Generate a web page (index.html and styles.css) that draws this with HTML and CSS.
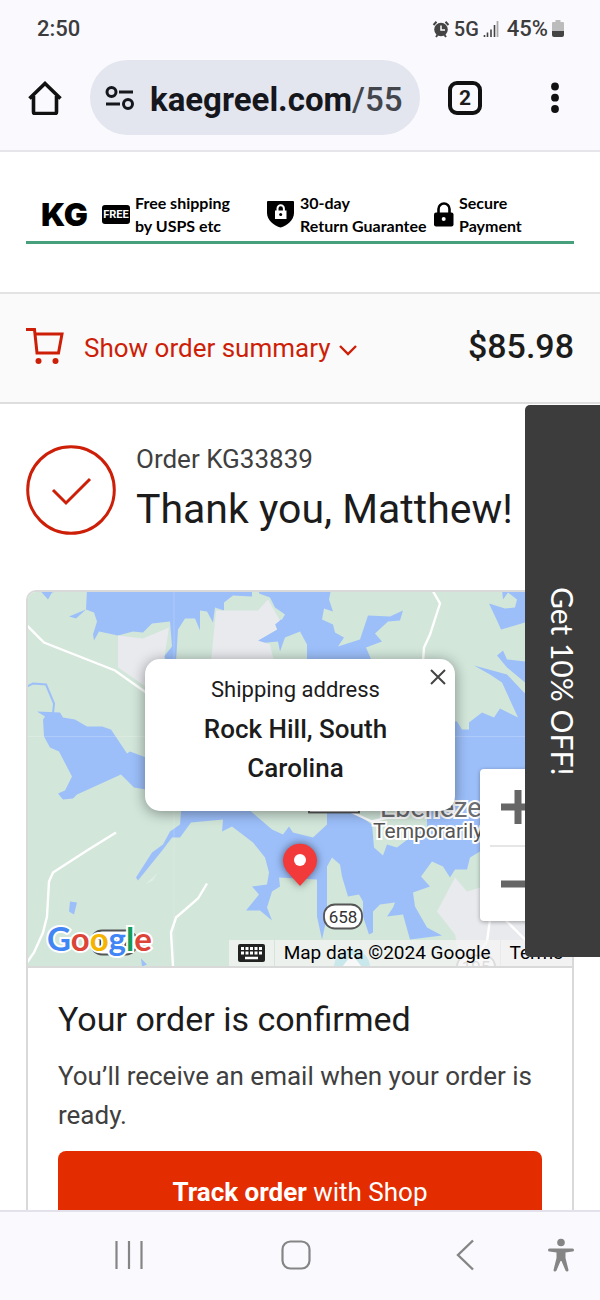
FILE: index.html
```html
<!DOCTYPE html>
<html lang="en">
<head>
<meta charset="utf-8">
<meta name="viewport" content="width=device-width, initial-scale=1">
<title>Thank you, Matthew!</title>
<link rel="stylesheet" href="styles.css">
</head>
<body>
<header class="chrome">
  <div class="status">
    <span class="clock">2:50</span>
    <div class="status-icons">
      <svg width="18" height="18" viewBox="0 0 18 18"><circle cx="9" cy="9.500" r="6.800" fill="#444"/><path d="M1.500 5 4.500 1.800M16.500 5 13.500 1.800M4 17l1.500-2M14 17l-1.500-2" stroke="#444" stroke-width="2"/><path d="M9 5.500V10h4" fill="none" stroke="#fff" stroke-width="1.500"/></svg>
      <span class="net">5G</span>
      <svg width="16" height="17" viewBox="0 0 16 17"><path d="M1.500 15v2M4.500 12.500V17M8 9.500V17M11.500 5V17" stroke="#444" stroke-width="1.600"/><path d="M14.500 1v16" stroke="#aaa" stroke-width="1.800"/></svg>
      <span class="pct">45%</span>
      <svg width="12" height="17" viewBox="0 0 12 17"><path d="M3.500 0h5v2H11q1 0 1 1v8H0V3q0-1 1-1h2.500z" fill="#bcbcbc"/><path d="M0 11h12v4q0 2-2 2H2q-2 0-2-2z" fill="#444"/></svg>
    </div>
  </div>
  <div class="toolbar">
    <button class="icon-btn" aria-label="Home"><svg width="34" height="34" viewBox="0 0 34 34"><path d="M1.500 17.500 17 2.500l15.500 15M5.500 15v16q0 1.500 1.500 1.500h20q1.500 0 1.500-1.500V15" fill="none" stroke="#111" stroke-width="3.600"/></svg></button>
    <button class="address"><svg width="29" height="26" viewBox="0 0 29 26" fill="none" stroke="#15171c" stroke-width="3"><circle cx="6.500" cy="7" r="4.500"/><path d="M14 7h14M1 19h14"/><circle cx="23" cy="19" r="4.500"/></svg><span class="url"><span class="domain">kaegreel.com</span>/55</span></button>
    <button class="tabs" aria-label="Open tabs">2</button>
    <button class="icon-btn" aria-label="More options"><svg width="10" height="32" viewBox="0 0 10 32" fill="#111"><circle cx="5" cy="4.500" r="3.900"/><circle cx="5" cy="15.700" r="3.900"/><circle cx="5" cy="27" r="3.900"/></svg></button>
  </div>
</header>

<main class="page">
  <section class="banner">
    <div class="banner-row">
      <span class="brand">KG</span>
      <div class="perk perk-ship"><span class="free">FREE</span><span>Free shipping<br>by USPS etc</span></div>
      <div class="perk perk-return"><svg width="28" height="28" viewBox="0 0 28 28"><path d="M0 2q0-1 1-1h25q1 0 1 1v11c0 7-7 13-13.500 14.500C7 26 0 20 0 13z"/><path d="M10.500 11V8.500a3.200 3.200 0 0 1 6.400 0V11" fill="none" stroke="#fff" stroke-width="2"/><path d="M8 10.500h11.500V19H8z" fill="#fff"/><circle cx="13.700" cy="14.500" r="1.500"/></svg><span>30-day<br>Return Guarantee</span></div>
      <div class="perk perk-pay"><svg width="20" height="25" viewBox="0 0 20 25"><path d="M4.500 12V7a5.500 5.500 0 0 1 11 0v5" fill="none" stroke="#000" stroke-width="2.600"/><rect y="10.500" width="19.500" height="14" rx="2"/><circle cx="9.700" cy="17" r="2" fill="#fff"/></svg><span>Secure<br>Payment</span></div>
    </div>
  </section>

  <section class="summary">
    <button class="summary-toggle">
      <svg width="38" height="38" viewBox="0 0 38 38" fill="none" stroke="#cd1f08" stroke-width="3"><path d="M0 2.500h8.500L11 26h21.500L36 7H9"/><circle cx="12.500" cy="34" r="3" fill="#cd1f08" stroke="none"/><circle cx="29.500" cy="34" r="3" fill="#cd1f08" stroke="none"/></svg>
      <span>Show order summary</span>
      <svg width="18" height="12" viewBox="0 0 18 12"><path d="m1 2 8 8 8-8" fill="none" stroke="#cd1f08" stroke-width="2.400"/></svg>
    </button>
    <strong class="total">$85.98</strong>
  </section>

  <section class="thanks">
    <svg class="check" width="90" height="90" viewBox="0 0 90 90" fill="none" stroke="#cd1f08" stroke-width="3"><circle cx="45" cy="45" r="43.300"/><path d="m27 45 13 13 24-24"/></svg>
    <div>
      <p class="order-no">Order KG33839</p>
      <h1>Thank you, Matthew!</h1>
    </div>
  </section>

  <section class="card">
    <div class="map">
      <svg class="map-art" viewBox="28 592 544 375" preserveAspectRatio="xMidYMid slice">
        <path fill="#d2e6da" d="M0 560h620v430H0z"/>
        <g fill="#9cbffa">
          <path d="M87 590 86 610 69 617 76 619 86 610 94 613 97 622 93 635 94 641 99 632 118 636 133 632 143 633 152 624 170 622 172 647 164 657 167 662H176L178 630 185 619H195L200 631V611L207 612 213 623 215 608 224 611V603L233 596 252 597V590H259V594L270 598 275 608 285 615 282 620 274 622 277 630 258 641 257 644 278 642 280 652 285 638 300 632 307 645V662H372L366 648 382 642 375 634 388 622 400 621 403 611 390 617 368 616 360 640 338 647 344 638 335 633 333 625 322 620 324 609 333 612 329 600 331 590z"/>
          <path d="M40 591 48 600 52 593 60 591zM502 590 503 600 508 593 517 600 515 608 505 609 489 604 497 621 501 630 525 623 573 610V590zM503 651 497 656 507 668 525 683V662L507 660z"/>
          <path d="M474 666 490 675 502 683 518 718 500 709 494 718 482 713 469 723V730H462L457 722 420 720V812H573V720L524 693 507 675z"/>
          <path d="M37 712 60 713 63 718 75 720 87 727H102L111 730 127 754 130 752 146 758 180 760V800L146 790 134 788 121 775 77 795 73 799 63 800 58 794 65 791 72 777 59 752 50 748 44 737 43 720 45 717z"/>
          <path d="M182 800 180 825 170 832 163 845 152 853 136 878 138 881 163 850 172 838H180L191 823 223 820 222 832 232 827 253 843 265 858 269 873 267 885 252 887 259 895 246 911H260L272 921 267 908 272 892 280 887 279 878 317 880V917L322 940 327 917V867L332 858 340 865 342 877 348 897 359 895 363 902V917L369 935 373 933V912L380 905 395 903 393 908 387 917 403 915 410 940 442 936 427 928 415 907 413 893 430 887 421 877 432 862 443 867 450 878 455 870 467 870 470 858 480 852 573 830V800z"/>
          <path d="M70 902 77 903 74 915 69 912zM141 959 147 965 142 967z"/>
        </g>
        <path fill="none" stroke="#9cbffa" stroke-width="2" d="M27 687 33 684 46 685 54 704 53 714"/>
        <g fill="#d2e6da"><path d="M250 800V811L272 830 283 835 289 827 293 833 313 838 327 825V800z"/><path d="M335 800 372 825 374 848 383 856 387 845 397 848 410 838 427 828V800z"/><path d="M258 603 259 594 267 599z"/></g>
        <g fill="#e8eaee"><path d="M118 636 143 639 169 628 164 660 150 690 118 668z"/><path d="M216 611H258L268 600 280 621 275 625 277 630 258 641 270 645 274 662H211z"/><path d="M455 878 467 892 480 888 573 860V970H462L455 935 437 912z"/></g>
        <g fill="none" stroke="#fff" stroke-width="2.400"><path d="M27 626 44 643 115 671 146 693"/><path d="M116 833 87 851 53 873 49 882 47 917 43 933 34 953 27 963"/><path d="M207 884 198 899 176 918 171 933 173 967"/><path d="M432 590 440 604 430 635 424 648 423 662"/><path d="M350 812 372 822 412 812M490 920 487 942 470 966M505 920 535 950"/></g>
        <path d="M145 885l13-12-5 8z" fill="#deeee5"/>
        <path d="M27 737H573M174 590V967" stroke="#fff" stroke-opacity=".2" fill="none"/>
        <circle cx="352" cy="968" r="18" fill="#54c4cf"/><path d="M340 970 352 955l12 15z" fill="#fff"/>
        <g fill="#fff" stroke="#555" stroke-width="1.800"><rect x="309" y="790" width="50" height="23"/><rect x="324" y="905" width="38" height="24" rx="11"/><rect x="91" y="931" width="46" height="24" rx="11"/><rect x="457" y="956" width="38" height="22" rx="11" stroke="#999"/></g>
        <g class="map-label"><text x="343" y="923" text-anchor="middle" class="route">658</text><text x="476" y="973" text-anchor="middle" class="route faint">195</text><text x="114" y="949" text-anchor="middle" class="route">1104</text><text x="380" y="817" class="town">Ebenezer</text><text x="373" y="838" class="note">Temporarily</text></g>
        <g class="google"><text x="47" y="951"><tspan fill="#4285f4">G</tspan><tspan fill="#db4437">o</tspan><tspan fill="#f4b400">o</tspan><tspan fill="#4285f4">g</tspan><tspan fill="#0f9d58">l</tspan><tspan fill="#db4437">e</tspan></text></g>
      </svg>
      <svg class="pin" width="38" height="46" viewBox="0 0 38 46"><path d="M19 45 5.500 30A17 17 0 1 1 32.500 30z" fill="#f33a3a"/><circle cx="19" cy="19" r="6" fill="#fff"/></svg>
      <div class="popup">
        <button class="close" aria-label="Close"><svg width="16" height="16" viewBox="0 0 16 16"><path d="m1 1 14 14M15 1 1 15" stroke="#444" stroke-width="2"/></svg></button>
        <p class="popup-label">Shipping address</p>
        <p class="popup-place">Rock Hill, South Carolina</p>
      </div>
      <div class="zoom">
        <button aria-label="Zoom in"><svg width="34" height="34" viewBox="0 0 34 34"><path d="M17 0v34M0 17h34" stroke="#666" stroke-width="7"/></svg></button>
        <button aria-label="Zoom out"><svg width="34" height="34" viewBox="0 0 34 34"><path d="M0 17h34" stroke="#666" stroke-width="7"/></svg></button>
      </div>
      <div class="credits">
        <button aria-label="Keyboard shortcuts"><svg width="27" height="18" viewBox="0 0 27 18"><rect width="27" height="18" rx="2" fill="#222"/><path d="M3 4.500h21M3 9h21" stroke="#fff" stroke-width="3" stroke-dasharray="3 1.500"/><path d="M7 14h13" stroke="#fff" stroke-width="2.500"/></svg></button>
        <span>Map data ©2024 Google</span>
        <a href="#terms">Terms</a>
      </div>
    </div>
    <div class="card-body">
      <h2>Your order is confirmed</h2>
      <p>You’ll receive an email when your order is ready.</p>
      <button class="track"><b>Track order</b> with Shop</button>
    </div>
  </section>
  <button class="promo">Get 10% OFF!</button>
</main>

<nav class="navbar">
  <div class="nav-main">
    <button aria-label="Recent apps"><svg width="28" height="30" viewBox="0 0 28 30"><path d="M1.500 1v28M14 1v28M26.500 1v28" stroke="#858585" stroke-width="2.200"/></svg></button>
    <button aria-label="Home screen"><svg width="30" height="30" viewBox="0 0 30 30"><rect x="1.500" y="1.500" width="27" height="27" rx="8" fill="none" stroke="#858585" stroke-width="2.200"/></svg></button>
    <button aria-label="Back"><svg width="26" height="32" viewBox="0 0 26 32"><path d="M25 1.500 10 16l15 14.500" fill="none" stroke="#858585" stroke-width="2.400"/></svg></button>
  </div>
  <button aria-label="Accessibility"><svg width="26" height="34" viewBox="0 0 26 34" fill="#858585"><circle cx="13" cy="4.500" r="3.800"/><path d="M1.500 10.500h23q1.500 0 1.500 1.500t-1.500 1.600L17.500 14.500V20l3 12q0 1.500-1.500 1.500-1 0-1.500-1L13.500 23h-1L8.500 32.500q-.5 1-1.500 1-1.500 0-1.500-1.500l3-12v-5.500L1.500 13.600Q0 13.500 0 12t1.500-1.500z"/></svg></button>
</nav>
</body>
</html>
```
FILE: styles.css
```css
* { box-sizing: border-box; }
body {
  margin: 0;
  height: 100vh;
  display: flex;
  flex-direction: column;
  overflow: hidden;
  background: #fff;
  color: #1c1c1c;
  font-family: Roboto, "Liberation Sans", sans-serif;
}
button {
  border: 0;
  padding: 0;
  background: none;
  color: inherit;
  font: inherit;
}
p, h1, h2 { margin: 0; font-weight: 400; }
svg { display: block; flex: none; }

.chrome { background: #faf9fe; border-bottom: 2px solid #e6e6ea; }
.status {
  display: flex;
  justify-content: space-between;
  align-items: center;
  height: 60px;
  padding: 0 36px 3px 37px;
  color: #3c3c3c;
  font-weight: 500;
}
.clock { font-size: 22px; }
.status-icons { display: flex; align-items: center; gap: 4px; }
.net { font-size: 20px; }
.pct { font-size: 22px; margin-left: 4px; }
.toolbar {
  display: flex;
  align-items: center;
  height: 90px;
  padding: 0 40px 15px 28px;
}
.address {
  flex: 1;
  display: flex;
  align-items: center;
  gap: 16px;
  min-width: 0;
  height: 75px;
  margin: 0 28px;
  padding: 0 15px;
  border-radius: 38px;
  background: #e3e6ef;
}
.url { padding-top: 4px; font-size: 33px; font-weight: 500; color: #42454c; }
.domain { color: #15171c; font-weight: 700; }
.tabs {
  width: 34px;
  height: 34px;
  margin-right: 68px;
  border: 4px solid #111;
  border-radius: 9px;
  font-size: 21px;
  font-weight: 700;
  line-height: 26px;
}

.page { position: relative; flex: 1; min-height: 0; overflow: hidden; }
.banner { height: 142px; padding: 36px 26px 0; border-bottom: 2px solid #e3e3e3; }
.banner-row {
  display: flex;
  align-items: center;
  height: 56px;
  padding-left: 15px;
  border-bottom: 3px solid #47a07c;
  color: #000;
  font: 700 16px/23px Lato, sans-serif;
  white-space: nowrap;
}
.brand { width: 61px; font: 900 32px/34px Inter, sans-serif; }
.perk { display: flex; align-items: center; gap: 5px; padding-bottom: 1px; }
.perk-ship { width: 165px; }
.perk-return { width: 167px; }
.free {
  width: 28px;
  border-radius: 3px;
  background: #000;
  color: #fff;
  font: 700 11px/19px Roboto, sans-serif;
  text-align: center;
}

.summary {
  display: flex;
  align-items: center;
  justify-content: space-between;
  height: 110px;
  padding: 0 26px 4px;
  border-bottom: 2px solid #dedede;
  background: #fafafa;
}
.summary-toggle {
  display: flex;
  align-items: center;
  gap: 8px;
  color: #cd1f08;
  font-size: 26px;
}
.summary-toggle span { margin-left: 12px; padding-top: 3px; }
.summary-toggle span + svg { margin-top: 8px; }
.total { font-size: 34px; font-weight: 500; }

.thanks { display: flex; gap: 20px; padding: 41px 26px 55px; }
.order-no { font-size: 26px; line-height: 28px; color: #404040; }
h1 { margin-top: 10px; font-size: 41px; line-height: 52px; }

.card { margin: 0 26px; border: 2px solid #d9d9d9; border-radius: 10px; overflow: hidden; }
.map { position: relative; height: 376px; border-bottom: 2px solid #d9d9d9; }
.map-art { width: 100%; height: 100%; }
.map-label text { fill: #555; }
.map-label .route { font-size: 17px; fill: #333; }
.map-label .faint { fill: #999; }
.map-label .town, .map-label .note { paint-order: stroke; stroke: #fff; stroke-width: 4px; }
.map-label .town { font-size: 27px; fill: #6c6f73; }
.map-label .note { font-size: 21px; }
.google {
  font-family: Lato, sans-serif;
  font-size: 33px;
  font-weight: 700;
  paint-order: stroke;
  stroke: #fff;
  stroke-width: 4px;
}
.pin {
  position: absolute;
  left: 50%;
  bottom: 79px;
  transform: translateX(-50%);
  filter: drop-shadow(0 0 4px #0008);
}
.popup {
  position: absolute;
  top: 67px;
  left: 50%;
  width: 310px;
  transform: translateX(-50%);
  padding: 15px 49px 23px 40px;
  border-radius: 15px;
  background: #fff;
  box-shadow: 0 2px 14px #0006;
  text-align: center;
}
.popup-label { font-size: 22px; line-height: 32px; }
.popup-place { margin-top: 4px; font-size: 26px; font-weight: 500; line-height: 39px; }
.close { position: absolute; top: 10px; right: 9px; }
.zoom {
  position: absolute;
  right: 16px;
  bottom: 45px;
  display: flex;
  flex-direction: column;
  width: 76px;
  padding: 0 10px;
  border-radius: 4px;
  background: #fff;
  box-shadow: 0 1px 4px #0005;
}
.zoom button { display: grid; place-items: center; height: 76px; }
.zoom button + button { border-top: 2px solid #e6e6e6; }
.credits {
  position: absolute;
  right: 0;
  bottom: 0;
  display: flex;
  gap: 1px;
  font-size: 19px;
  line-height: 26px;
  color: #000;
}
.credits > * { padding: 0 9px; background: #f5f5f5b8; }
.credits a { color: inherit; text-decoration: none; }
.card-body { padding: 31px 30px; }
h2 { font-size: 34px; line-height: 40px; }
.card-body p { margin: 18px 0 16px; font-size: 26px; line-height: 39px; color: #404040; }
.track {
  width: 100%;
  height: 82px;
  border-radius: 8px;
  background: #e32c00;
  color: #fff;
  font-size: 26px;
}
.track b { font-weight: 700; }
.promo {
  position: absolute;
  top: 253px;
  right: 0;
  width: 75px;
  height: 552px;
  border-radius: 5px 0 0 5px;
  background: #3c3c3c;
  color: #fff;
  font: 30px Lato, sans-serif;
  writing-mode: vertical-rl;
  text-align: center;
}

.navbar {
  display: flex;
  align-items: center;
  gap: 74px;
  height: 90px;
  padding: 0 26px 2px 115px;
  border-top: 2px solid #e3e2ec;
  background: #faf9fe;
}
.nav-main { flex: 1; display: flex; align-items: center; justify-content: space-between; }
```
